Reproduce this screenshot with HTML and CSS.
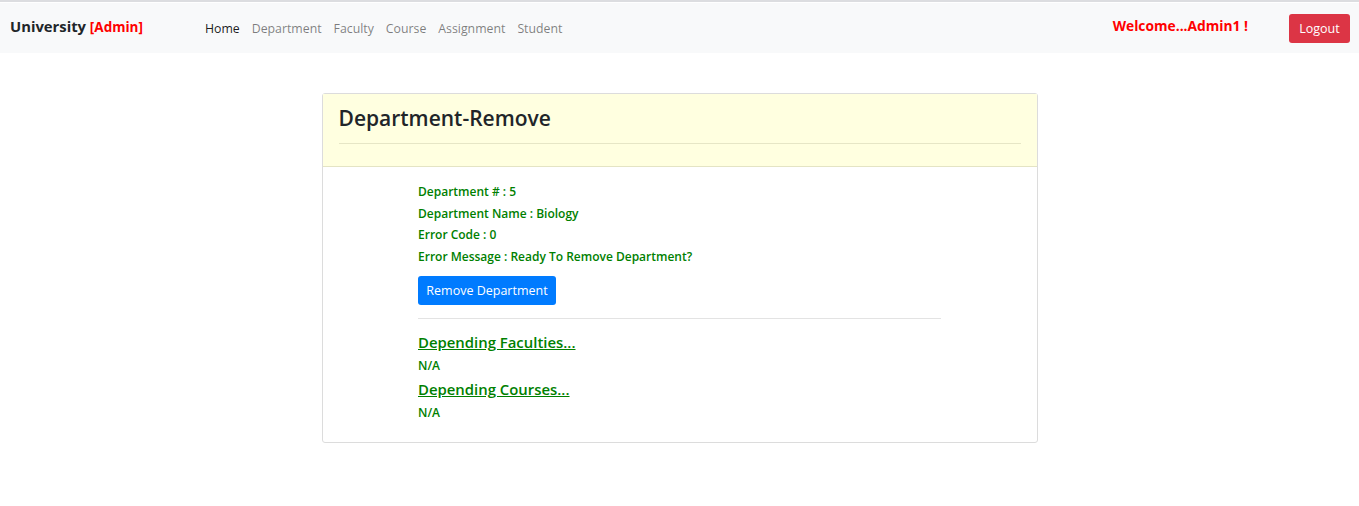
FILE: index.html
```html
<!DOCTYPE html>
<html>
<head>
<meta charset="utf-8">
<title>Department-Remove</title>
<link rel="stylesheet" href="styles.css">
</head>
<body>
<nav class="navbar">
  <div class="brand">University <span class="brand-role">[Admin]</span></div>
  <ul class="nav">
    <li><a class="nav-link active" href="#">Home</a></li>
    <li><a class="nav-link" href="#">Department</a></li>
    <li><a class="nav-link" href="#">Faculty</a></li>
    <li><a class="nav-link" href="#">Course</a></li>
    <li><a class="nav-link" href="#">Assignment</a></li>
    <li><a class="nav-link" href="#">Student</a></li>
  </ul>
  <div class="welcome">Welcome...Admin1 !</div>
  <button class="btn btn-logout">Logout</button>
</nav>

<main class="card">
  <div class="card-header">
    <h3 class="card-title">Department-Remove</h3>
    <hr class="header-rule">
  </div>
  <div class="card-body">
    <div class="content">
      <div class="info">Department # : 5</div>
      <div class="info">Department Name : Biology</div>
      <div class="info">Error Code : 0</div>
      <div class="info">Error Message : Ready To Remove Department?</div>
      <button class="btn btn-remove">Remove Department</button>
      <hr class="body-rule">
      <a class="dep-link" href="#">Depending Faculties...</a>
      <div class="info">N/A</div>
      <a class="dep-link" href="#">Depending Courses...</a>
      <div class="info">N/A</div>
    </div>
  </div>
</main>
</body>
</html>
```

FILE: styles.css
```css
* { box-sizing: border-box; }
body {
  margin: 0;
  font-family: "Open Sans", "Noto Sans", sans-serif;
  color: #212529;
  background: #fff;
  border-top: 2px solid #dcdde0;
}
.navbar {
  display: flex;
  align-items: center;
  height: 50px;
  margin-top: 1px;
  padding: 0 9px 0 10px;
  background: #f8f9fa;
}
.brand {
  font-size: 14.8px;
  font-weight: 700;
  color: #212529;
  margin-top: -4px;
  width: 189px;
}
.brand-role { color: #ff0000; font-size: 13.5px; }
.nav {
  display: flex;
  list-style: none;
  margin: 0;
  padding: 0;
}
.nav-link {
  display: block;
  padding: 0 6px;
  font-size: 12.3px;
  text-decoration: none;
  color: rgba(0,0,0,.5);
}
.nav-link.active { color: rgba(0,0,0,.9); }
.welcome {
  margin-left: auto;
  margin-right: 41px;
  margin-top: -6px;
  color: #ff0000;
  font-weight: 700;
  font-size: 13.8px;
}
.btn {
  border: 1px solid transparent;
  border-radius: 3px;
  color: #fff;
  font-family: inherit;
  font-size: 12.5px;
  height: 29px;
  cursor: pointer;
}
.btn-logout { background: #dc3545; width: 61px; padding: 0; }
.card {
  width: 716px;
  margin: 40px auto 0;
  border: 1px solid #dcdcdc;
  border-radius: 3px;
}
.card-header {
  background: #ffffe0;
  border-bottom: 1px solid #e4e4c4;
  padding: 8px 16px 22px;
}
.card-title {
  margin: 0;
  font-size: 21px;
  font-weight: 600;
  line-height: 32px;
}
.header-rule {
  margin: 9px 0 0;
  border: 0;
  border-top: 1px solid #e6e6c6;
}
.card-body { padding: 14px 16px 19px; }
.content {
  width: 523px;
  margin: 0 auto;
  display: flex;
  flex-direction: column;
  align-items: flex-start;
}
.info {
  color: #008000;
  font-size: 12px;
  font-weight: 600;
  line-height: 21.5px;
}
.btn-remove {
  background: #007bff;
  margin-top: 9px;
  width: 138px;
  padding: 0;
}
.body-rule {
  width: 100%;
  margin: 13px 0 11px;
  border: 0;
  border-top: 1px solid #e3e3e3;
}
.dep-link {
  color: #008000;
  font-size: 14.9px;
  font-weight: 600;
  line-height: 25px;
  text-decoration: underline;
}
```
